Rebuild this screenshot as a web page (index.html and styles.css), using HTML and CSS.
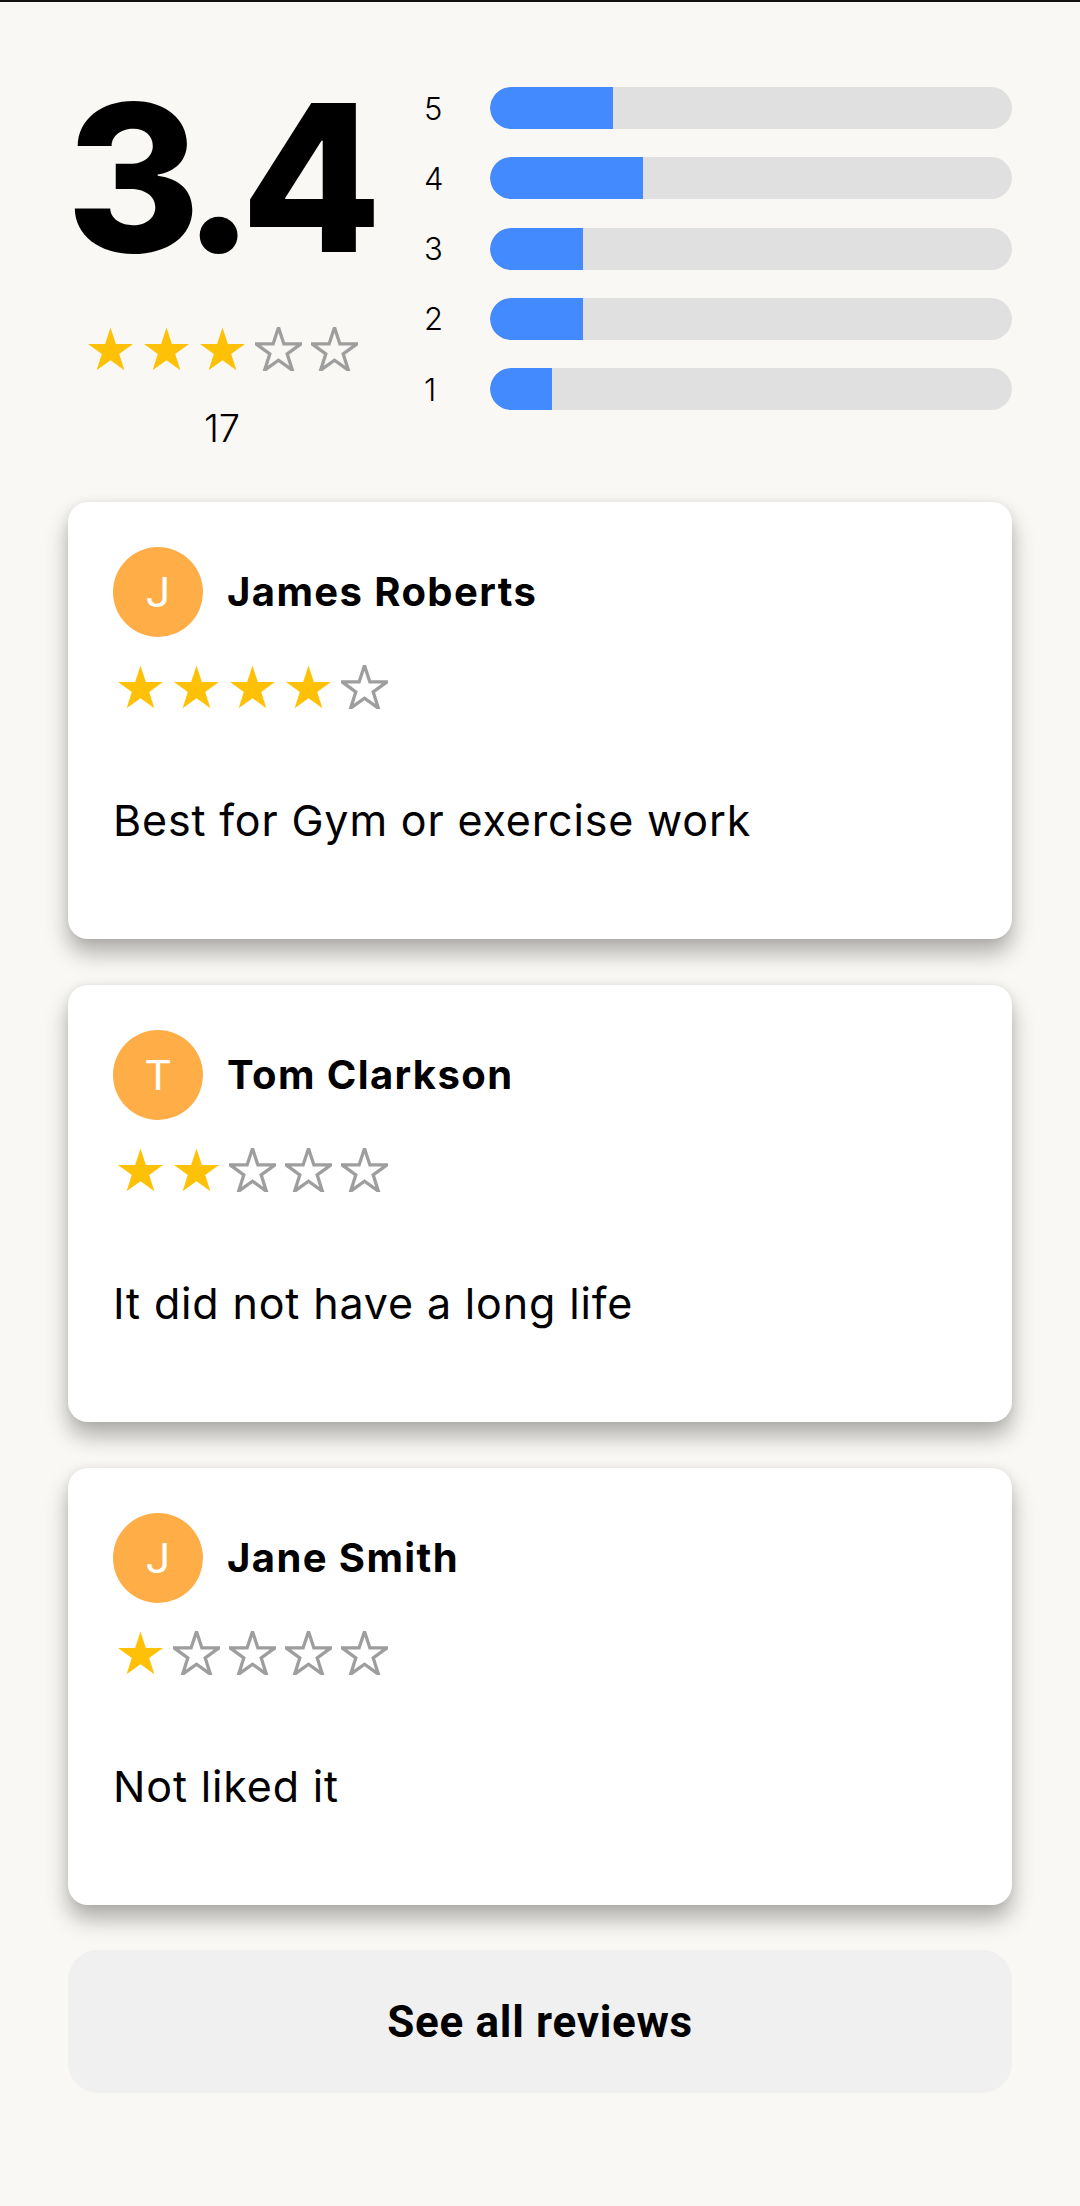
FILE: index.html
```html
<!DOCTYPE html>
<html lang="en">
<head>
<meta charset="utf-8">
<title>Reviews</title>
<link rel="stylesheet" href="styles.css">
</head>
<body>
<svg class="defs" width="0" height="0" aria-hidden="true">
  <defs>
    <symbol id="star" viewBox="0 0 48 45">
      <polygon points="24,0.6 29.5,17.3 47,17.3 32.9,27.6 38.2,44.2 24,34 9.8,44.2 15.1,27.6 1,17.3 18.5,17.3"/>
    </symbol>
  </defs>
</svg>
<main class="page">
  <section class="summary">
    <div class="score">
      <div class="score-value">3.4</div>
      <div class="stars stars-summary">
        <svg class="star on"><use href="#star"/></svg>
        <svg class="star on"><use href="#star"/></svg>
        <svg class="star on"><use href="#star"/></svg>
        <svg class="star off"><use href="#star"/></svg>
        <svg class="star off"><use href="#star"/></svg>
      </div>
      <div class="score-count">17</div>
    </div>
    <div class="bars">
      <div class="bar-row"><span class="bar-label">5</span><div class="track"><div class="fill" style="width:23.5%"></div></div></div>
      <div class="bar-row"><span class="bar-label">4</span><div class="track"><div class="fill" style="width:29.4%"></div></div></div>
      <div class="bar-row"><span class="bar-label">3</span><div class="track"><div class="fill" style="width:17.8%"></div></div></div>
      <div class="bar-row"><span class="bar-label">2</span><div class="track"><div class="fill" style="width:17.8%"></div></div></div>
      <div class="bar-row"><span class="bar-label">1</span><div class="track"><div class="fill" style="width:11.8%"></div></div></div>
    </div>
  </section>

  <section class="reviews">
    <article class="card">
      <div class="card-head">
        <div class="avatar">J</div>
        <div class="name">James Roberts</div>
      </div>
      <div class="stars stars-card">
        <svg class="star on"><use href="#star"/></svg>
        <svg class="star on"><use href="#star"/></svg>
        <svg class="star on"><use href="#star"/></svg>
        <svg class="star on"><use href="#star"/></svg>
        <svg class="star off"><use href="#star"/></svg>
      </div>
      <p class="review-text">Best for Gym or exercise work</p>
    </article>

    <article class="card">
      <div class="card-head">
        <div class="avatar">T</div>
        <div class="name">Tom Clarkson</div>
      </div>
      <div class="stars stars-card">
        <svg class="star on"><use href="#star"/></svg>
        <svg class="star on"><use href="#star"/></svg>
        <svg class="star off"><use href="#star"/></svg>
        <svg class="star off"><use href="#star"/></svg>
        <svg class="star off"><use href="#star"/></svg>
      </div>
      <p class="review-text">It did not have a long life</p>
    </article>

    <article class="card">
      <div class="card-head">
        <div class="avatar">J</div>
        <div class="name">Jane Smith</div>
      </div>
      <div class="stars stars-card">
        <svg class="star on"><use href="#star"/></svg>
        <svg class="star off"><use href="#star"/></svg>
        <svg class="star off"><use href="#star"/></svg>
        <svg class="star off"><use href="#star"/></svg>
        <svg class="star off"><use href="#star"/></svg>
      </div>
      <p class="review-text">Not liked it</p>
    </article>
  </section>

  <button class="see-all" type="button">See all reviews</button>
</main>
</body>
</html>
```

FILE: styles.css
```css
* {
  box-sizing: border-box;
}

html, body {
  margin: 0;
  padding: 0;
}

body {
  background: #f9f8f4;
  border-top: 2px solid #111;
  font-family: "Inter", "Open Sans", sans-serif;
  color: #000;
  min-height: 2206px;
}

.defs {
  position: absolute;
  width: 0;
  height: 0;
  overflow: hidden;
}

.page {
  padding: 0 68px;
}

/* ---------- summary ---------- */
.summary {
  display: flex;
  align-items: flex-start;
  padding-top: 73px;
}

.score {
  width: 308px;
  display: flex;
  flex-direction: column;
  align-items: center;
}

.score-value {
  font-family: "Inter", sans-serif;
  font-weight: 800;
  font-size: 205px;
  line-height: 1;
  letter-spacing: -14px;
  margin-right: 10px;
}

.stars {
  display: flex;
  gap: 9px;
}

.star {
  width: 47px;
  height: 44px;
  overflow: visible;
}

.star.on {
  fill: #ffc107;
}

.star.off {
  fill: none;
  stroke: #9e9e9e;
  stroke-width: 3.4;
  stroke-linejoin: miter;
}

.stars-summary {
  margin-top: 47px;
}

.score-count {
  margin-top: 38px;
  font-weight: 300;
  font-size: 38px;
  line-height: 1;
}

.bars {
  flex: 1;
  margin-left: 48px;
  padding-top: 12px;
  display: flex;
  flex-direction: column;
  gap: 28.3px;
}

.bar-row {
  display: flex;
  align-items: center;
  height: 42px;
}

.bar-label {
  width: 66px;
  font-weight: 300;
  font-size: 31px;
  line-height: 1;
}

.track {
  flex: 1;
  height: 42px;
  border-radius: 21px;
  background: #e0e0e0;
  overflow: hidden;
}

.fill {
  height: 100%;
  background: #448aff;
  border-radius: 21px 0 0 21px;
}

/* ---------- review cards ---------- */
.reviews {
  margin-top: 55px;
  display: flex;
  flex-direction: column;
  gap: 46px;
}

.card {
  background: #fff;
  border-radius: 20px;
  padding: 45px 45px 0;
  height: 437px;
  box-shadow: 0 14px 22px rgba(0, 0, 0, 0.3), 0 0 8px rgba(0, 0, 0, 0.07);
}

.card-head {
  display: flex;
  align-items: center;
  gap: 24px;
  height: 90px;
}

.avatar {
  width: 90px;
  height: 90px;
  border-radius: 50%;
  background: #ffad47;
  color: #fff;
  display: flex;
  align-items: center;
  justify-content: center;
  font-family: "Roboto", sans-serif;
  font-size: 43px;
  line-height: 1;
}

.name {
  font-weight: 700;
  font-size: 40px;
  letter-spacing: 1.4px;
  line-height: 1;
}

.stars-card {
  margin-top: 28px;
  margin-left: 4px;
}

.review-text {
  margin: 81px 0 0;
  font-size: 43px;
  line-height: 60px;
  font-weight: 400;
  letter-spacing: 0.85px;
}

/* ---------- button ---------- */
.see-all {
  display: block;
  width: 100%;
  margin-top: 45px;
  height: 143px;
  border: none;
  border-radius: 30px;
  background: #f0f0f0;
  font-family: "Roboto", sans-serif;
  font-weight: 700;
  font-size: 44px;
  letter-spacing: 0.7px;
  color: #000;
  padding: 0;
}
```
